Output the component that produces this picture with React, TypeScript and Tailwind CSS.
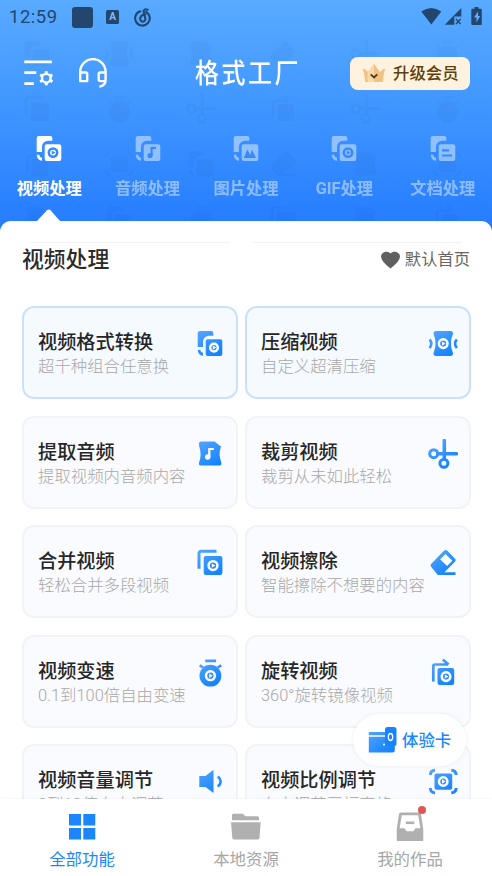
import type { ReactNode } from 'react'

const BLUE = 'url(#brand)'

function Play({ x, y, r = 3.8, tint = 'white' }: { x: number; y: number; r?: number; tint?: string }) {
  return (
    <>
      <circle cx={x} cy={y} r={r} fill="none" stroke={tint} strokeWidth="2.5" />
      <path d={`M${x - 1.2} ${y - 2.2}l3.6 2.2-3.6 2.2z`} fill={tint} />
    </>
  )
}

const BACK_SHEET = 'M5 2h11.3a2 2 0 0 1 2 2v2.8H14a6 6 0 0 0-6 6V18H2.7V4.3A2.3 2.3 0 0 1 5 2zM2.7 20.800h2.500q.3 2.600 2.800 3v3q-5-.4-5.300-6z'
const FRONT_SHEET = 'M12.7 10.3h12.6a2 2 0 0 1 2 2v12.7a2 2 0 0 1-2 2H12.7a2 2 0 0 1-2-2V12.3a2 2 0 0 1 2-2z'

const TOOL_ICONS: Record<string, ReactNode> = {
  convert: (
    <>
      <path d={BACK_SHEET + FRONT_SHEET} fill={BLUE} />
      <Play x={19} y={18.6} />
    </>
  ),
  compress: (
    <>
      <path d="M8 2h14.5a2.500 2.500 0 0 1 2.400 3.300c-.5 2-1.900 4-1.900 9.200s1.400 7.200 1.900 9.200a2.500 2.500 0 0 1-2.400 3.300H8a2.500 2.500 0 0 1-2.400-3.300c.5-2 1.900-4 1.900-9.200S6.100 7.300 5.600 5.300A2.500 2.500 0 0 1 8 2z" fill={BLUE} />
      <path d="M1.500 10.500q3.800 4 0 8.500M28.900 10.500q-3.800 4 0 8.500" stroke={BLUE} strokeWidth="2.6" fill="none" />
      <Play x={15.2} y={14.6} r={4.3} />
    </>
  ),
  audio: (
    <>
      <path d="M6 2.500h13.500l6.500 5q-1.800 5.500-1.500 8.500t1.800 7.500v1.500a1.500 1.500 0 0 1-1.500 1.500H5.500A1.500 1.500 0 0 1 4 25v-1.500q1.600-4 1.600-8T4 6.500v-2a2 2 0 0 1 2-2z" fill={BLUE} />
      <circle cx="12.7" cy="18" r="2.7" fill="white" />
      <path d="M14.300 18v-8h4.500" stroke="white" strokeWidth="2.2" fill="none" />
    </>
  ),
  cut: (
    <g stroke={BLUE} fill="none" strokeWidth="3">
      <circle cx="5.7" cy="14.7" r="4" />
      <circle cx="15.9" cy="24.3" r="4" />
      <path d="M9.500 14.700H28.500M16.300 1.500v18.500" strokeWidth="3.5" strokeLinecap="round" />
    </g>
  ),
  merge: (
    <>
      <path d="M4 20.800V5.300a2 2 0 0 1 2-2h15.500" stroke={BLUE} strokeWidth="3" fill="none" />
      <rect x="8.7" y="8" width="18.7" height="19" rx="2.2" fill={BLUE} />
      <Play x={18} y={17.6} r={4.4} />
    </>
  ),
  erase: (
    <>
      <path d="M16.300 2.600a2 2 0 0 1 2.800 0l8 8.200a1.800 1.800 0 0 1 0 2.600L16.500 24.300h11V27H9.800l-6.700-8.200a2 2 0 0 1 0-2.800z" fill={BLUE} />
      <path d="M17.500 5.900l6.800 6.800-5.200 5.300-7-6.800z" fill="white" />
    </>
  ),
  speed: (
    <>
      <path d="M10.200 2.900h10.900M4.700 7.300l3.500 2.200M26.200 7.300l-3.500 2.200" stroke={BLUE} strokeWidth="2.6" fill="none" />
      <circle cx="15.4" cy="17.7" r="10.9" fill={BLUE} />
      <Play x={15.4} y={17.7} r={4.4} />
    </>
  ),
  rotate: (
    <>
      <path d="M5.300 23.500V8a1.500 1.500 0 0 1 1.500-1.500H20M14.800 1.500l5.800 5" stroke={BLUE} strokeWidth="2.7" fill="none" />
      <rect x="9.5" y="10" width="16.7" height="17" rx="2.2" fill={BLUE} />
      <Play x={18} y={18.6} r={4.3} />
    </>
  ),
  volume: (
    <>
      <path d="M4.300 9h6.200l8-6.300V26l-8-6H4.300z" fill={BLUE} />
      <path d="M22.800 9.500q5.800 4.800 0 10" stroke={BLUE} strokeWidth="2.6" fill="none" />
    </>
  ),
  ratio: (
    <>
      <path d="M2.300 8q.3-4.700 4.700-4.800M23.300 3.200Q28 3.400 28.200 8M2.300 21q.3 4.700 4.700 4.800M23.300 25.800Q28 25.600 28.200 21" stroke={BLUE} strokeWidth="2.9" fill="none" />
      <rect x="6.5" y="6.5" width="17.7" height="16.2" rx="2" fill={BLUE} />
      <Play x={15.2} y={14.5} r={4.2} />
    </>
  ),
}

const TOOLS = [
  { icon: 'convert', title: '视频格式转换', desc: '超千种组合任意换', hot: true },
  { icon: 'compress', title: '压缩视频', desc: '自定义超清压缩', hot: true },
  { icon: 'audio', title: '提取音频', desc: '提取视频内音频内容' },
  { icon: 'cut', title: '裁剪视频', desc: '裁剪从未如此轻松' },
  { icon: 'merge', title: '合并视频', desc: '轻松合并多段视频' },
  { icon: 'erase', title: '视频擦除', desc: '智能擦除不想要的内容' },
  { icon: 'speed', title: '视频变速', desc: '0.1到100倍自由变速' },
  { icon: 'rotate', title: '旋转视频', desc: '360°旋转镜像视频' },
  { icon: 'volume', title: '视频音量调节', desc: '0到10倍自由调节' },
  { icon: 'ratio', title: '视频比例调节', desc: '自由调节画幅宽格' },
]

const TAB_TINT = '#3789ff'

const TABS: { label: string; glyph: ReactNode }[] = [
  { label: '视频处理', glyph: <Play x={19} y={18.6} r={4.2} tint={TAB_TINT} /> },
  {
    label: '音频处理',
    glyph: (
      <>
        <circle cx="17" cy="21.5" r="2.6" fill={TAB_TINT} />
        <path d="M18.600 21.500v-7.700H23" stroke={TAB_TINT} strokeWidth="2.2" fill="none" />
      </>
    ),
  },
  { label: '图片处理', glyph: <path d="M12.800 24l3.500-8.500 3 5.500 1.500-5.500L25 24z" fill={TAB_TINT} /> },
  { label: 'GIF处理', glyph: <Play x={19} y={18.6} r={4.2} tint={TAB_TINT} /> },
  {
    label: '文档处理',
    glyph: <path d="M14 16.300h7M14 21.500h10" stroke={TAB_TINT} strokeWidth="2.2" fill="none" />,
  },
]

// faint icons tiled behind the header
const PATTERN = [
  'convert', 'compress', 'audio', 'erase', 'cut', 'speed',
  'merge', 'speed', 'cut', 'rotate', 'cut', 'speed',
  'rotate', 'ratio', 'convert', 'erase', 'audio', 'ratio',
  'audio', 'convert', 'speed', 'merge', 'audio', 'rotate',
]

function StatusBar() {
  return (
    <div className="flex h-[34px] items-center px-[9px] text-[#23466f]">
      <span className="w-[63px] text-[18.5px] leading-none tracking-[0.5px]">12:59</span>
      <span className="h-[21px] w-[21px] rounded-[3px] bg-[#23466f]" />
      <span className="ml-[13px] flex h-[14px] w-[13px] items-center justify-center rounded-[1.5px] bg-[#23466f] text-[10px] font-bold leading-none text-[#7fbcff]">A</span>
      <svg viewBox="0 0 18 19" className="ml-[15px] h-[19px] w-[18px]" fill="none" stroke="currentColor" strokeWidth="2.1" strokeLinecap="round">
        <path d="M6.300 3.300A7.300 7.300 0 1 0 12 3.900M13.500 1.800c-2.500-1.300-4.300.3-3.700 2.400l1.500 6.200a2.600 2.600 0 1 1-5-.2c.3-2.500 2.500-3.900 4.900-3.600" />
      </svg>
      <svg viewBox="0 0 62 20" className="ml-auto h-5 w-[62px]" fill="currentColor">
        <path d="M.3 4.500Q10.300-2.500 20.300 4.500L10.300 17.500zM40.300 1v8.500h-7v8.300h-9.500z" />
        <path d="M35 12l4.600 5M39.600 12L35 17" stroke="currentColor" strokeWidth="1.3" />
        <path d="M53.500 0h4v1.700h2.300a1 1 0 0 1 1 1v14.400a1 1 0 0 1-1 1h-8.500a1 1 0 0 1-1-1V2.700a1 1 0 0 1 1-1h2.200z" />
        <path d="M57 4.500l-4 6h2.500v5l3.600-6.400H57z" fill="#62aeff" />
      </svg>
    </div>
  )
}

function Header() {
  return (
    <header className="relative h-[232px] shrink-0 bg-linear-to-b from-[#58abff] to-[#247bff] text-white">
      <div className="pointer-events-none absolute inset-x-0 top-[39px] grid h-[193px] grid-cols-6 gap-y-[25px] overflow-hidden opacity-[0.025] brightness-0">
        {PATTERN.map((name, i) => (
          <svg key={i} viewBox="0 0 30 30" className="ml-[22px] h-[30px] w-[30px]">{TOOL_ICONS[name]}</svg>
        ))}
      </div>
      <div className="relative">
        <StatusBar />
        <div className="flex h-[78px] items-center px-[22px]">
          <svg viewBox="0 0 31 30" className="h-[30px] w-[31px]" fill="none" stroke="white" strokeWidth="2.7">
            <path d="M2.300 3.800h27.500M2.300 14.700h12M2.300 25.600h9.500" />
            <circle cx="24.3" cy="20.2" r="4.3" strokeWidth="2.4" />
            <path d="M24.300 13.300v2M24.300 25v2.200M18.200 16.700l2 1.200M28.400 22.500l2 1.200M18.200 23.700l2-1.200M28.400 17.900l2-1.200" strokeWidth="3" />
          </svg>
          <svg viewBox="0 0 30 30" className="ml-[25px] h-[30px] w-[30px]" fill="none" stroke="white" strokeWidth="2.4" strokeLinejoin="round">
            <path d="M2.200 22.500V13.800a12.700 12.700 0 0 1 25.400 0v8c0 3.800-2.200 6.300-6.300 6.800M2.200 14.500h5.700q1.300 0 1.300 1.300v7.300H2.200zM27.600 14.500h-5.400q-1.500 0-1.500 1.500v5.600q0 1.500 1.500 1.500h5.400" />
          </svg>
          <h1 className="ml-[87px] mt-[2px] scale-y-112 text-[24px] font-medium leading-none tracking-[2.5px]">格式工厂</h1>
          <button className="ml-auto flex h-[33px] w-[120px] items-center rounded-[8px] bg-[#fff3df] pl-3 text-[16.4px] font-medium text-[#5d3f0c]">
            <svg viewBox="0 0 24 20" className="mr-[7px] h-5 w-6">
              <path d="M.5 5.500q2.800.2 5.500 3.500L12 .8 18 9q2.700-3.300 5.500-3.500-1.500 2.500-2.500 12.500-.1 1-1.200 1H4.200Q3.100 19 3 18 2 8 .5 5.500z" fill="#efc286" />
              <path d="M12 .8L6 9q-1.500 5 0 10h6z" fill="#f8d9a9" />
              <path d="M8.700 11.300l3.300 3.200 3.300-3.200" fill="none" stroke="#553810" strokeWidth="1.8" />
            </svg>
            <span className="pt-[3px]">升级会员</span>
          </button>
        </div>
        <nav className="grid grid-cols-5 pt-[22px]">
          {TABS.map(({ label, glyph }, i) => (
            <button key={label} className={`flex flex-col items-center text-[16.3px] font-bold leading-6 ${i === 0 ? '' : 'opacity-45'}`}>
              <svg viewBox="0 0 30 30" className="h-[30px] w-[30px]">
                <path d={BACK_SHEET + FRONT_SHEET} fill="white" />
                {glyph}
              </svg>
              <span className="mt-[13px]">{label}</span>
            </button>
          ))}
        </nav>
      </div>
    </header>
  )
}

function BottomNav() {
  return (
    <nav className="relative grid h-[77px] shrink-0 grid-cols-3 bg-white pt-[12px] text-[16.4px] leading-6 text-[#a6a6a6] shadow-[0_-1px_2px_rgba(0,0,0,0.03)]">
      <button className="flex flex-col items-center text-[#1c86ff]">
        <svg viewBox="0 0 28 30" className="h-[30px] w-7" fill="currentColor">
          <path d="M1 3h12v11.500H1zM15.300 3h12v11.500h-12zM1 17h12v11.500H1zM15.300 17h12v11.500h-12z" />
        </svg>
        <span className="mt-[7px]">全部功能</span>
      </button>
      <button className="flex flex-col items-center">
        <svg viewBox="0 0 30 30" className="h-[30px] w-[30px]" fill="#b0b0b0">
          <path d="M1 4.300a1.500 1.500 0 0 1 1.500-1.500h9.300L14.500 5.300h12a1.500 1.500 0 0 1 1.500 1.500v2.400H1zM0 11.300h29.700l-1.200 15.500a1.700 1.700 0 0 1-1.700 1.700H3a1.700 1.700 0 0 1-1.700-1.700z" />
        </svg>
        <span className="mt-[7px]">本地资源</span>
      </button>
      <button className="relative flex flex-col items-center">
        <svg viewBox="0 0 28 30" className="h-[30px] w-7">
          <path d="M5 1.500h18a2 2 0 0 1 2 1.500l2.300 15.500v10.300a1.500 1.500 0 0 1-1.500 1.500H2.200A1.500 1.500 0 0 1 .7 28.800V18.500L3 3a2 2 0 0 1 2-1.500z" fill="#b0b0b0" />
          <path d="M5.800 4.300h16.400l2.200 13h-4.800l-2.300 3h-6.600l-2.300-3H3.600z" fill="white" />
          <path d="M9.800 11.800h8.500" stroke="#b0b0b0" strokeWidth="2.6" />
        </svg>
        <span className="absolute left-[90px] top-[-5px] h-[8px] w-[8px] rounded-full bg-[#df5555]" />
        <span className="mt-[7px]">我的作品</span>
      </button>
    </nav>
  )
}

export default function App() {
  return (
    <div className="relative flex h-[876px] w-[492px] flex-col overflow-hidden bg-white font-[Roboto,'Noto_Sans_CJK_SC',sans-serif]">
      <svg width="0" height="0" className="absolute">
        <defs>
          <linearGradient id="brand" gradientUnits="userSpaceOnUse" x1="4" y1="2" x2="20" y2="26">
            <stop stopColor="#55a5fb" />
            <stop offset="1" stopColor="#1684ff" />
          </linearGradient>
        </defs>
      </svg>
      <Header />
      <main className="relative -mt-[11px] min-h-0 flex-1 rounded-t-[11px] bg-white">
        <svg viewBox="0 0 26 13" className="absolute left-9 top-[-12px] h-[13px] w-[26px]">
          <path d="M0 13L11 1.200q1.700-1.500 3.400 0L25 13z" fill="white" />
        </svg>
        <div className="absolute left-[30px] top-[21px] h-px w-[200px] bg-[#f3f3f3]" />
        <div className="absolute left-[253px] top-[21px] h-px w-[209px] bg-[#f3f3f3]" />
        <div className="relative flex h-[76px] items-center justify-between px-[22px] pt-[2px]">
          <h2 className="text-[21.8px] font-medium text-[#2b2b2b]">视频处理</h2>
          <span className="flex items-center gap-[5px] text-[16.3px] text-[#666]">
            <svg viewBox="0 0 19 18" className="h-[18px] w-[19px]" fill="#606060">
              <path d="M9.500 17.500Q0 10.200 0 5.500C0 .6 6.800-1 9.500 2.600 12.200-1 19 .6 19 5.500q0 4.700-9.500 12z" />
            </svg>
            默认首页
          </span>
        </div>
        <div className="mt-[9px] grid grid-cols-[216px_226px] gap-x-[7px] gap-y-[16.5px] pl-[22px]">
          {TOOLS.map(({ icon, title, desc, hot }) => (
            <div
              key={icon}
              className={`flex h-[93px] items-start justify-between rounded-[12px] border-2 pl-[14px] pt-[21px] ${hot ? 'border-[#cbe1fb] bg-[#f5faff]' : 'border-[#f2f3f6] bg-[#fafbfe]'}`}
            >
              <div className="whitespace-nowrap pt-px">
                <div className="text-[19.2px] font-medium leading-[26px] text-[#262626]">{title}</div>
                <div className="text-[16.4px] font-light leading-[22px] text-[#a8a8a8]">{desc}</div>
              </div>
              <svg viewBox="0 0 30 30" className="mr-[11px] h-[30px] w-[30px] shrink-0">{TOOL_ICONS[icon]}</svg>
            </div>
          ))}
        </div>
      </main>
      <button className="absolute bottom-[110px] right-[26px] flex h-[52px] w-[113px] items-center rounded-full bg-white pl-[15px] text-[16.4px] font-medium text-[#1c86ff] shadow-[0_0_4px_rgba(0,0,0,0.07)]">
        <svg viewBox="0 0 29 28" className="mr-[5px] h-7 w-[29px]">
          <path d="M.8 6h18v3.200H.8zM.8 10.700h26V24q0 2.500-2.500 2.500H.8z" fill={BLUE} />
          <rect x="17" y="1" width="11.5" height="19" rx="2.5" fill="#1684ff" />
          <ellipse cx="22.5" cy="11" rx="2.2" ry="3.5" fill="none" stroke="white" strokeWidth="1.3" />
          <circle cx="16" cy="18.5" r="1" fill="white" />
        </svg>
        <span className="pt-[2px]">体验卡</span>
      </button>
      <BottomNav />
    </div>
  )
}
